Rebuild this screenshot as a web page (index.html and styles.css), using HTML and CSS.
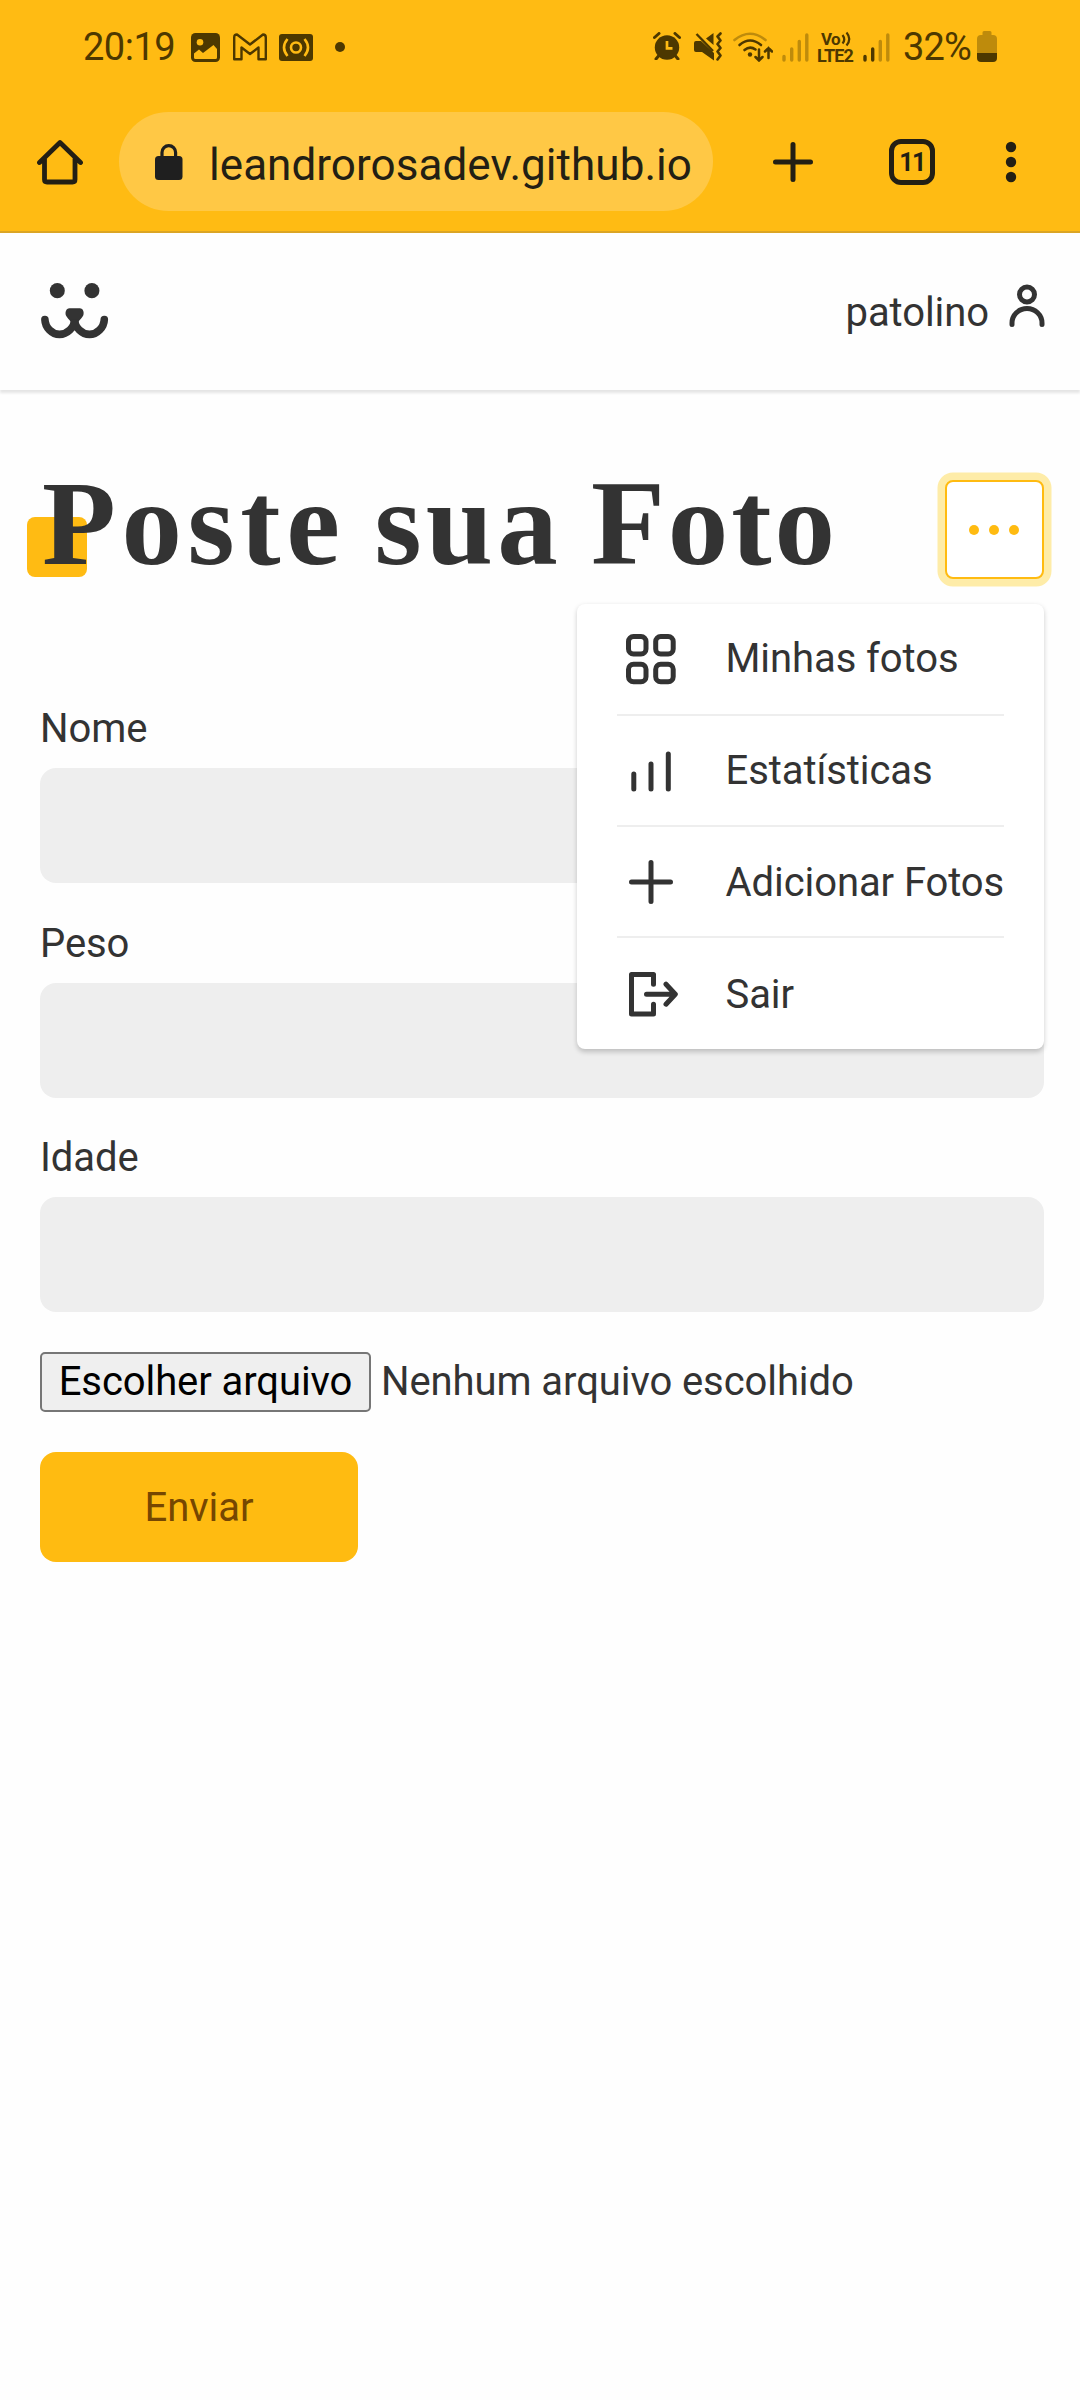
FILE: index.html
```html
<!DOCTYPE html>
<html lang="pt-BR">
<head>
<meta charset="utf-8">
<title>Poste sua Foto</title>
<link rel="stylesheet" href="styles.css">
</head>
<body>
<div class="browser">
  <div class="status">
    <span class="clock">20:19</span>
    <svg class="st-photo" width="29" height="29" viewBox="0 0 29 29"><rect width="29" height="29" rx="4.5" fill="#4d3800"/><circle cx="9" cy="9.300" r="3.3" fill="#ffbb13"/><path d="M3 20.500l5-4 4 3.500 10.500-8 3.500 4v8.500q0 1.500-1.500 1.500h-20q-1.500 0-1.500-1.500z" fill="#ffbb13"/></svg>
    <svg class="st-mail" width="34" height="28" viewBox="0 0 34 28"><path d="M1.200 4.500Q1.200 1.500 4 1.500L17 11.500 30 1.500Q32.800 1.500 32.800 4.500V26.300H25.500V14.500L17 21 8.500 14.500V26.300H1.200Z" fill="none" stroke="#4d3800" stroke-width="2.400" stroke-linejoin="round"/></svg>
    <svg class="st-cam" width="34" height="27" viewBox="0 0 34 27"><rect width="34" height="27" rx="3" fill="#4d3800"/><circle cx="17" cy="13.500" r="5" fill="none" stroke="#ffbb13" stroke-width="2.600"/><path d="M8.500 5Q1.500 13.500 8.500 22M25.500 5Q32.500 13.500 25.500 22" fill="none" stroke="#ffbb13" stroke-width="2.600"/></svg>
    <i class="st-dot"></i>
    <div class="status-right">
      <svg class="st-alarm" width="28" height="28" viewBox="0 0 28 28"><circle cx="14" cy="15.500" r="12.200" fill="#4d3800"/><path d="M1.500 5.500L6 1.500M26.500 5.500L22 1.500M5.500 24L3 27M22.500 24L25 27" stroke="#4d3800" stroke-width="3" stroke-linecap="round"/><path d="M14 9v7.300h5.500" fill="none" stroke="#ffbb13" stroke-width="2.700"/></svg>
      <svg class="st-mute" width="28" height="29" viewBox="0 0 28 29"><path d="M0 11q0-2 2-2h5l13 12v7.500L8 20H2q-2 0-2-2zM12 6.500L19.500 1v12z" fill="#4d3800"/><path d="M2.500 2L19 19" stroke="#4d3800" stroke-width="2.400"/><path d="M26.500 1.500l-3 3 3 4-3 3.500 3 4-3 3.500 3 4-3 4" fill="none" stroke="#4d3800" stroke-width="2.600" stroke-linecap="round" stroke-linejoin="round"/></svg>
      <svg class="st-wifi" width="40" height="30" viewBox="0 0 40 30"><g fill="none" stroke="#4d3800" stroke-width="2.600" stroke-linecap="round"><path d="M1.500 8Q17 -4.500 32.500 8" stroke="#be8b0c"/><path d="M6.500 13Q17 4 28 13"/><path d="M11.500 18Q17 13.500 22.500 17.500"/><path d="M26 17.500V28M22.500 25l3.500 3.500L29.500 25M35.500 26V16M32 19.500l3.500-3.500L39 19.500" stroke-width="2.500"/></g><circle cx="17" cy="22.500" r="2.200" fill="#4d3800"/></svg>
      <svg class="st-sig1" width="27" height="29" viewBox="0 0 27 29"><path d="M2 23.500v3.500M9.700 16v11M17.300 8.500v18.500M24.800 2v25" stroke="#be8b0c" stroke-width="3.400" stroke-linecap="round"/></svg>
      <div class="st-volte">
        <div class="vo">Vo<svg width="10" height="16" viewBox="0 0 10 16"><path d="M1.500 4q3.500 4.500 0 8.500M5.500 1.500q5.500 6.500 0 13" fill="none" stroke="#4d3800" stroke-width="2.200"/></svg></div>
        <div class="lte">LTE2</div>
      </div>
      <svg class="st-sig2" width="27" height="29" viewBox="0 0 27 29"><path d="M17.300 8.500v18.500M24.800 2v25" stroke="#be8b0c" stroke-width="3.400" stroke-linecap="round"/><path d="M2 23.500v3.500M9.700 16v11" stroke="#4d3800" stroke-width="3.400" stroke-linecap="round"/></svg>
      <span class="pct">32%</span>
      <svg class="st-bat" width="20" height="31" viewBox="0 0 20 31"><path d="M5.500 4V1.500Q5.500 0 7 0h6q1.500 0 1.500 1.500V4H16q4 0 4 4v14H0V8q0-4 4-4z" fill="#be8b0c"/><path d="M0 22h20v5q0 4-4 4H4q-4 0-4-4z" fill="#4d3800"/></svg>
    </div>
  </div>
  <div class="toolbar">
    <svg class="home" width="46" height="46" viewBox="0 0 46 46"><path d="M2.500 23.500L23 3.500 43.500 23.500M7.500 20V40.500Q7.500 43 10 43H35.500Q38 43 38 40.500V20" fill="none" stroke="#231f14" stroke-width="4.800" stroke-linecap="round" stroke-linejoin="round"/></svg>
    <div class="url">
      <svg width="28" height="36" viewBox="0 0 28 36"><rect y="12" width="27.500" height="24" rx="3.500" fill="#1f1f1f"/><path d="M7 13V8.500a6.800 6.800 0 0 1 13.600 0V13" fill="none" stroke="#1f1f1f" stroke-width="3.200"/></svg>
      <span class="host">leandrorosadev.github.io</span>
    </div>
    <svg class="newtab" width="40" height="40" viewBox="0 0 40 40"><path d="M20 2.500v35M2.500 20h35" stroke="#231f14" stroke-width="5" stroke-linecap="round"/></svg>
    <div class="tabs">11</div>
    <svg class="more" width="12" height="42" viewBox="0 0 12 42"><circle cx="6" cy="6" r="5.200"/><circle cx="6" cy="21" r="5.200"/><circle cx="6" cy="36" r="5.200"/></svg>
  </div>
</div>

<header class="header">
  <svg class="logo" width="70" height="56" viewBox="0 0 70 56"><g fill="#333"><ellipse cx="17.300" cy="7.700" rx="7.500" ry="7.600"/><ellipse cx="51.900" cy="7.700" rx="7.500" ry="7.600"/><path d="M29.500 25.200h10.300c3.500 0 4.700 4.500 3.300 7.600-1.200 2.400-3 3.700-4.500 5.700v6h-8v-6c-1.500-2-3.300-3.300-4.500-5.700-1.400-3.100-.1-7.600 3.400-7.600z"/></g><path d="M4.900 36.500C5.200 44.600 12 51.400 19.500 51.400S34.500 44.600 34.600 36.500C34.800 44.600 42 51.400 49.500 51.400S64 44.600 64.300 36.500" fill="none" stroke="#333" stroke-width="7.600" stroke-linecap="round" stroke-linejoin="bevel"/></svg>
  <a class="user"><span>patolino</span><svg width="36" height="46" viewBox="0 0 36 46"><g fill="none" stroke="#333" stroke-width="5"><circle cx="18" cy="10.500" r="7.500"/><path d="M3 40.500V39a15 14.500 0 0 1 30 0v1.500" stroke-linecap="round"/></g></svg></a>
</header>

<main class="main">
  <div class="head">
    <h1 class="title"><span class="wide">Poste</span> sua <span class="tight">Foto</span></h1>
    <button class="menu-btn" aria-label="Menu"><i></i><i></i><i></i></button>
    <nav class="menu">
      <a><svg width="54" height="54" viewBox="0 0 54 54"><rect x="4.500" y="4.500" width="17.500" height="17.500" rx="5"/><rect x="31.700" y="4.500" width="17.500" height="17.500" rx="5"/><rect x="4.500" y="32.200" width="17.500" height="17.500" rx="5"/><rect x="31.700" y="32.200" width="17.500" height="17.500" rx="5"/></svg><span>Minhas fotos</span></a>
      <a><svg width="54" height="54" viewBox="0 0 54 54"><path d="M9.800 30V45M27 20V45M44.300 10V45"/></svg><span>Estatísticas</span></a>
      <a><svg width="54" height="54" viewBox="0 0 54 54"><path d="M27 7.500V46.500M7.500 27H46.500"/></svg><span>Adicionar Fotos</span></a>
      <a><svg width="54" height="54" viewBox="0 0 54 54"><path d="M29.500 17.300V7.500H7.500V46.900H29.500V37.300M22.500 27.200H51M42 17.200L51.300 27.200 42 37.200"/></svg><span>Sair</span></a>
    </nav>
  </div>
  <form class="form">
    <label class="field"><span>Nome</span><input type="text"></label>
    <label class="field"><span>Peso</span><input type="text"></label>
    <label class="field"><span>Idade</span><input type="text"></label>
    <div class="file"><button type="button" class="file-btn">Escolher arquivo</button><span>Nenhum arquivo escolhido</span></div>
    <button type="button" class="send">Enviar</button>
  </form>
</main>
</body>
</html>
```
FILE: styles.css
```css
* { box-sizing: border-box; }
body { margin: 0; min-height: 2400px; background: #fefefe; color: #333; font-family: Roboto, sans-serif; font-size: 40px; letter-spacing: -0.08px; }
svg { display: block; flex: none; }
button { font: inherit; letter-spacing: inherit; margin: 0; padding: 0; }

/* phone and browser bars */
.browser { height: 233px; background: #ffbb13; border-bottom: 2px solid #dba524; }
.status { display: flex; align-items: flex-start; height: 112px; padding: 31px 83px 0 83px; color: #4d3800; }
.clock, .pct { font-size: 38px; line-height: 32px; letter-spacing: -0.5px; }
.clock { width: 108px; }
.st-photo { margin-top: 2px; }
.st-mail { margin: 2px 0 0 13px; }
.st-cam { margin: 3px 0 0 12px; }
.st-dot { width: 10px; height: 10px; margin: 11px 0 0 22px; border-radius: 50%; background: #4d3800; }
.status-right { display: flex; align-items: flex-start; margin-left: auto; }
.st-alarm { margin: 1px 13px 0 0; }
.st-mute { margin: 1px 11px 0 0; }
.st-wifi { margin: 1px 9px 0 0; }
.st-sig1 { margin: 2px 8px 0 0; }
.st-volte { width: 39px; margin-right: 7px; font-weight: 700; white-space: nowrap; }
.vo { display: flex; gap: 1px; height: 15px; padding-left: 4px; font-size: 17px; line-height: 16px; letter-spacing: -0.6px; }
.lte { height: 18px; font-size: 18px; line-height: 19px; letter-spacing: -0.8px; }
.st-sig2 { margin: 2px 13px 0 0; }
.pct { width: 74px; white-space: nowrap; letter-spacing: -0.8px; }

.toolbar { display: flex; align-items: center; height: 99px; padding-left: 37px; }
.url { display: flex; align-items: center; width: 594px; height: 99px; margin-left: 36px; padding-left: 36px; border-radius: 50px; background: #ffc845; color: #231f14; }
.host { margin-left: 26px; padding-top: 6px; font-size: 44px; letter-spacing: 0.05px; white-space: nowrap; }
.newtab { margin-left: 60px; }
.tabs { display: flex; align-items: center; justify-content: center; width: 46px; height: 46px; margin-left: 76px; padding-top: 2px; border: 5px solid #231f14; border-radius: 12px; color: #231f14; font-size: 25px; font-weight: 700; letter-spacing: -1.5px; }
.more { margin-left: 70px; fill: #231f14; }

/* site header */
.header { display: flex; align-items: center; justify-content: space-between; height: 157px; padding: 0 35px 0 40px; box-shadow: 0 2.5px 2.5px rgba(0, 0, 0, .1); }
.logo { margin-bottom: 2px; }
.user { display: flex; align-items: center; gap: 20px; }
.user span { padding-top: 2px; }
.user svg { margin-bottom: 10px; }

.main { padding: 84px 36px 0 40px; }
.head { position: relative; display: flex; justify-content: space-between; height: 225px; }
.title { position: relative; z-index: 0; margin: -11px 0 0; padding-left: 2px; color: #333; font-family: "Liberation Serif", serif; font-size: 121px; font-weight: 700; line-height: 120px; letter-spacing: 4.2px; word-spacing: -5.5px; white-space: nowrap; }
.title .wide { letter-spacing: 5.6px; }
.title .tight { letter-spacing: 3px; }
.title::after { content: ""; position: absolute; z-index: -1; left: -13px; top: 54px; width: 60px; height: 60px; border-radius: 8px; background: #ffbb13; }
.menu-btn { display: flex; align-items: center; justify-content: center; gap: 10px; width: 99px; height: 99px; margin-top: 6px; padding-right: 1px; border: 2px solid #fb1; border-radius: 8px; background: #fff; box-shadow: 0 0 0 7.5px #feeca8; }
.menu-btn i { width: 10px; height: 10px; border-radius: 50%; background: #fb1; }

/* open menu lies over the form */
.menu { position: absolute; z-index: 2; top: 130px; right: 0; width: 467.500px; padding: 0 40px; border-radius: 8px; background: #fff; box-shadow: 0 2.5px 5px rgba(0, 0, 0, .2); }
.menu a { display: flex; align-items: center; gap: 48px; height: 111px; padding-left: 7px; border-bottom: 2px solid #eee; white-space: nowrap; }
.menu a:first-child { height: 112px; }
.menu span { padding-top: 2px; }
.menu a:first-child span { padding-top: 0; margin-top: -2px; }
.menu a:nth-child(2) span { padding-top: 0; }
.menu a:last-child { border-bottom: 0; }
.menu svg { fill: none; stroke: #333; stroke-width: 5; stroke-linecap: round; stroke-linejoin: round; }

.form { display: flex; flex-direction: column; align-items: flex-start; }
.field { display: flex; flex-direction: column; width: 100%; height: 214.500px; padding-top: 6px; }
.field span { line-height: 48px; margin-bottom: 15px; }
.field input { width: 100%; height: 115px; border: 0; border-radius: 16px; background: #eee; }
.file { display: flex; align-items: center; gap: 10px; margin-top: 9px; }
.file-btn { width: 331px; height: 60px; border: 2px solid #767676; border-radius: 5px; background: #efefef; color: #000; }
.send { width: 318px; height: 110px; margin-top: 40px; padding-top: 1px; border: 0; border-radius: 16px; background: #fb1; color: #764701; }
```
